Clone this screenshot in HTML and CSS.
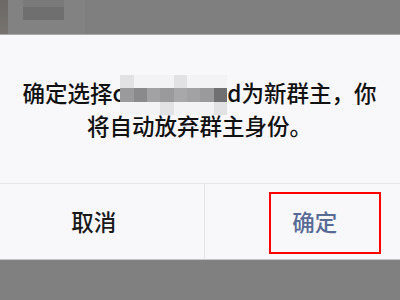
FILE: index.html
```html
<!DOCTYPE html>
<html lang="zh-CN">
<head>
<meta charset="utf-8">
<title>确定选择新群主</title>
<link rel="stylesheet" href="styles.css">
</head>
<body>
<div class="page">
  <div class="band">
    <span class="blur-edge"></span>
    <span class="blur-panel">
      <span class="blur-block"></span>
    </span>
  </div>
  <div class="dialog">
    <p class="msg">确定选择<span class="name">c<span class="mask"><span class="mask-grid">
      <i class="c1"></i><i class="c0"></i><i class="c0"></i><i class="c0"></i><i class="c1"></i><i class="c0"></i><i class="c0"></i><i class="c0"></i>
      <i class="d1"></i><i class="d2"></i><i class="d3"></i><i class="d1"></i><i class="d4"></i><i class="d3"></i><i class="d1"></i><i class="d5"></i>
      <i class="c0"></i><i class="c0"></i><i class="c0"></i><i class="c1"></i><i class="c0"></i><i class="c0"></i><i class="c0"></i><i class="c1"></i>
    </span></span>d</span>为新群主，你<br>将自动放弃群主身份。</p>
    <div class="actions">
      <button class="btn cancel">取消</button>
      <button class="btn ok">确定<span class="mark"></span></button>
    </div>
  </div>
  <div class="below"></div>
</div>
</body>
</html>
```
FILE: styles.css
```css
html, body {
  margin: 0;
  padding: 0;
  overflow: hidden;
  background: #808080;
}
.page {
  width: 400px;
  height: 300px;
  overflow: hidden;
  display: flex;
  flex-direction: column;
  font-family: "Noto Sans CJK SC", "Noto Sans", sans-serif;
}
.band {
  height: 34px;
  flex: none;
  display: flex;
  align-items: flex-start;
  background: #7f7f7f;
  border-bottom: 1px solid #a9a9a9;
}
.blur-edge {
  width: 8px;
  height: 34px;
  background: linear-gradient(#6c6966, #77726e);
}
.blur-panel {
  width: 77px;
  height: 34px;
  background: #828282;
  padding-left: 15px;
  box-sizing: border-box;
}
.blur-block {
  display: block;
  width: 41px;
  height: 20px;
  background: linear-gradient(#7a7a7a 0 7px, #6f6f6f 7px);
}
.dialog {
  flex: none;
  width: 441px;
  margin-left: -16px;
  background: #f8f7fa;
  display: flex;
  flex-direction: column;
  border-bottom: 1px solid #c6c6c6;
}
.msg {
  margin: 0;
  padding: 41px 25px 41px 15px;
  font-size: 22.5px;
  font-weight: 500;
  line-height: 33px;
  color: #111;
  text-align: center;
}
.name {
  white-space: nowrap;
}
.mask {
  display: inline-block;
  position: relative;
  width: 107px;
  height: 1px;
  margin-left: -4px;
  vertical-align: top;
}
.mask-grid {
  position: absolute;
  left: 0;
  top: -1px;
  width: 107px;
  display: grid;
  grid-template-columns: repeat(8, 1fr);
  grid-template-rows: 13px 14px 13px;
}
.mask-grid i { display: block; }
.c0 { background: #f3f2f5; }
.c1 { background: #e2e1e4; }
.d1 { background: #9a9a9c; }
.d2 { background: #8a8a8c; }
.d3 { background: #a2a2a4; }
.d4 { background: #a8a8aa; }
.d5 { background: #707072; }
.actions {
  display: grid;
  grid-template-columns: 1fr 1fr;
  height: 75px;
  border-top: 1px solid #e6e5e9;
}
.btn {
  position: relative;
  margin: 0;
  padding: 0;
  border: 0;
  background: transparent;
  font-family: inherit;
  font-size: 22.5px;
  font-weight: 500;
  line-height: 75px;
}
.cancel {
  color: #1a1a1a;
  border-right: 1px solid #e6e5e9;
}
.ok {
  color: #576b95;
}
.mark {
  position: absolute;
  left: 64px;
  top: 8px;
  width: 112px;
  height: 62px;
  box-sizing: border-box;
  border: 2px solid #ff0000;
}
.below {
  flex: 1;
  background: #808080;
}
```
